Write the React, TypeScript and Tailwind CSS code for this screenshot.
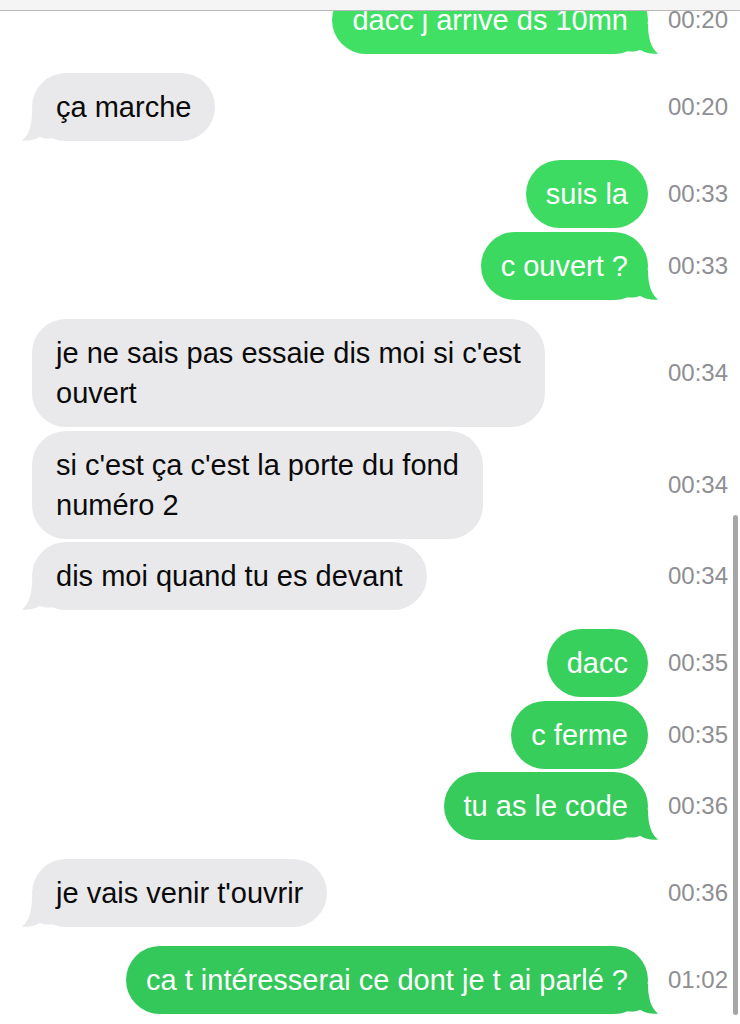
import type { ReactNode } from "react";

type Msg = {
  id: number;
  from: "me" | "them";
  text: ReactNode;
  time: string;
  tail?: boolean;
  gap: string;
  bg?: string;
  fill?: string;
};

const messages: Msg[] = [
  { id: 1, from: "me", text: "dacc j arrive ds 10mn", time: "00:20", tail: true, gap: "mt-[-14px]", bg: "bg-[#3fe064]", fill: "#3fe064" },
  { id: 2, from: "them", text: "ça marche", time: "00:20", tail: true, gap: "mt-[19px]" },
  { id: 3, from: "me", text: "suis la", time: "00:33", gap: "mt-[19px]", bg: "bg-[#3ddb62]", fill: "#3ddb62" },
  { id: 4, from: "me", text: "c ouvert ?", time: "00:33", tail: true, gap: "mt-[4px]", bg: "bg-[#3cd961]", fill: "#3cd961" },
  {
    id: 5,
    from: "them",
    text: (
      <>
        je ne sais pas essaie dis moi si c'est
        <br />
        ouvert
      </>
    ),
    time: "00:34",
    gap: "mt-[19px]",
  },
  {
    id: 6,
    from: "them",
    text: (
      <>
        si c'est ça c'est la porte du fond
        <br />
        numéro 2
      </>
    ),
    time: "00:34",
    gap: "mt-[4px]",
  },
  { id: 7, from: "them", text: "dis moi quand tu es devant", time: "00:34", tail: true, gap: "mt-[3px]" },
  { id: 8, from: "me", text: "dacc", time: "00:35", gap: "mt-[19px]", bg: "bg-[#38d05d]", fill: "#38d05d" },
  { id: 9, from: "me", text: "c ferme", time: "00:35", gap: "mt-[4px]", bg: "bg-[#37ce5c]", fill: "#37ce5c" },
  { id: 10, from: "me", text: "tu as le code", time: "00:36", tail: true, gap: "mt-[3px]", bg: "bg-[#36cb5b]", fill: "#36cb5b" },
  { id: 11, from: "them", text: "je vais venir t'ouvrir", time: "00:36", tail: true, gap: "mt-[19px]" },
  { id: 12, from: "me", text: "ca t intéresserai ce dont je t ai parlé ?", time: "01:02", tail: true, gap: "mt-[19px]", bg: "bg-[#34c759]", fill: "#34c759" },
];

// iOS style tail, drawn for the right side; flipped for incoming bubbles
const Tail = ({ fill, left }: { fill: string; left?: boolean }) => (
  <svg
    width="30"
    height="30"
    viewBox="0 0 30 30"
    className={`absolute bottom-0 ${left ? "left-[-10px] -scale-x-100" : "right-[-10px]"}`}
  >
    <path
      d="M0 0 L20 0 C20 14 23 24 30 29.6 C24 30.4 17 29 12 25.8 C9 27.5 5 27.8 0 27.5 Z"
      fill={fill}
    />
  </svg>
);

const Bubble = ({ msg }: { msg: Msg }) => {
  const mine = msg.from === "me";
  return (
    <div className={`flex items-center ${msg.gap}`}>
      <div className={`flex flex-1 ${mine ? "justify-end" : "justify-start pl-8"}`}>
        <div
          className={`relative rounded-[34px] py-[14px] text-[29px] leading-[40px] ${
            mine ? `${msg.bg} px-5 text-white` : "bg-[#e9e9eb] px-6 text-[#0a0a0a]"
          }`}
        >
          {msg.tail && <Tail fill={mine ? msg.fill ?? "#34c759" : "#e9e9eb"} left={!mine} />}
          <span className="relative">{msg.text}</span>
        </div>
      </div>
      <div className="w-[92px] shrink-0 pl-5 text-[24px] text-[#8e8e93]">{msg.time}</div>
    </div>
  );
};

export default function App() {
  return (
    <div
      className="relative h-[1024px] w-[740px] overflow-hidden bg-white"
      style={{ fontFamily: '"Liberation Sans", Arial, sans-serif' }}
    >
      <div className="absolute inset-x-0 top-0 z-10 h-[11px] border-b border-[#b9b9b9] bg-[#f5f5f5]" />
      <div className="flex flex-col">
        {messages.map((m) => (
          <Bubble key={m.id} msg={m} />
        ))}
      </div>
      <div className="absolute right-[2px] top-[515px] h-[500px] w-[5px] rounded-full bg-[#a6a6a6]" />
    </div>
  );
}
